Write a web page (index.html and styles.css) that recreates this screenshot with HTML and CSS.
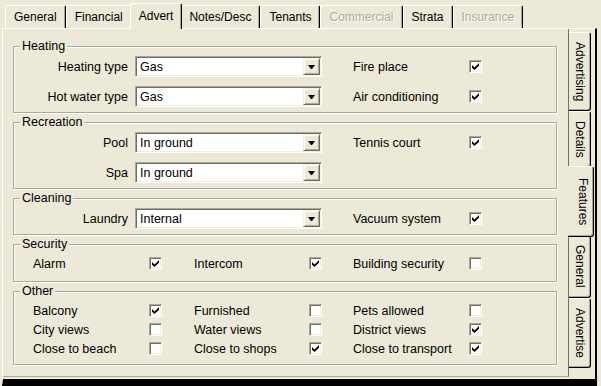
FILE: index.html
```html
<!DOCTYPE html>
<html lang="en">
<head>
    <meta charset="UTF-8">
    <title>Property - Advert</title>
    <link rel="stylesheet" href="styles.css">
</head>
<body>
    <div class="window">
        <div class="top-tabs">
            <span class="tab">General</span>
            <span class="tab">Financial</span>
            <span class="tab active">Advert</span>
            <span class="tab">Notes/Desc</span>
            <span class="tab">Tenants</span>
            <span class="tab disabled">Commercial</span>
            <span class="tab">Strata</span>
            <span class="tab disabled">Insurance</span>
        </div>

        <div class="frame">
            <div class="page">
                <fieldset class="group">
                    <legend>Heating</legend>
                    <div class="combo-rows">
                        <label class="field-label">Heating type</label>
                        <div class="combo"><span class="combo-value">Gas</span><span class="combo-btn"></span></div>
                        <span>Fire place</span>
                        <span class="check on"></span>

                        <label class="field-label">Hot water type</label>
                        <div class="combo"><span class="combo-value">Gas</span><span class="combo-btn"></span></div>
                        <span>Air conditioning</span>
                        <span class="check on"></span>
                    </div>
                </fieldset>

                <fieldset class="group">
                    <legend>Recreation</legend>
                    <div class="combo-rows">
                        <label class="field-label">Pool</label>
                        <div class="combo"><span class="combo-value">In ground</span><span class="combo-btn"></span></div>
                        <span>Tennis court</span>
                        <span class="check on"></span>

                        <label class="field-label">Spa</label>
                        <div class="combo"><span class="combo-value">In ground</span><span class="combo-btn"></span></div>
                    </div>
                </fieldset>

                <fieldset class="group">
                    <legend>Cleaning</legend>
                    <div class="combo-rows">
                        <label class="field-label">Laundry</label>
                        <div class="combo"><span class="combo-value">Internal</span><span class="combo-btn"></span></div>
                        <span>Vacuum system</span>
                        <span class="check on"></span>
                    </div>
                </fieldset>

                <fieldset class="group security">
                    <legend>Security</legend>
                    <div class="check-rows">
                        <span>Alarm</span><span class="check on"></span>
                        <span>Intercom</span><span class="check on"></span>
                        <span>Building security</span><span class="check"></span>
                    </div>
                </fieldset>

                <fieldset class="group other">
                    <legend>Other</legend>
                    <div class="check-rows">
                        <span>Balcony</span><span class="check on"></span>
                        <span>Furnished</span><span class="check"></span>
                        <span>Pets allowed</span><span class="check"></span>

                        <span>City views</span><span class="check"></span>
                        <span>Water views</span><span class="check"></span>
                        <span>District views</span><span class="check on"></span>

                        <span>Close to beach</span><span class="check"></span>
                        <span>Close to shops</span><span class="check on"></span>
                        <span>Close to transport</span><span class="check on"></span>
                    </div>
                </fieldset>
            </div>

            <div class="side-tabs">
                <span class="side-tab">Advertising</span>
                <span class="side-tab">Details</span>
                <span class="side-tab active">Features</span>
                <span class="side-tab">General</span>
                <span class="side-tab">Advertise</span>
            </div>
        </div>
    </div>
</body>
</html>
```

FILE: styles.css
```css
body {
    margin: 0;
    background-color: #ece9d8;
    font-family: "Liberation Sans", Arial, sans-serif;
    font-size: 12.5px;
    color: #000;
}
.window {
    width: 601px;
    height: 386px;
    overflow: hidden;
}

/* top tab strip */
.top-tabs {
    display: flex;
    align-items: flex-end;
    height: 28px;
    padding-left: 5px;
    font-size: 12px;
}
.tab {
    height: 23px;
    box-sizing: border-box;
    padding: 4px 8px 0;
    line-height: 14px;
    white-space: nowrap;
    background-color: #ece9d8;
    border: 1px solid #fff;
    border-bottom: none;
    border-right-color: #000;
    border-radius: 2px 2px 0 0;
    box-shadow: inset -1px 0 #aca899;
}
.tab.active {
    height: 26px;
    padding-top: 5px;
    margin: 0 -2px -1px;
    position: relative;
    z-index: 1;
}
.tab.disabled {
    color: #aca899;
    text-shadow: 1px 1px #fff;
}

/* frame holding the page and the side tabs */
.frame {
    display: flex;
    margin-left: 2px;
    width: 595px;
    box-sizing: border-box;
    border-top: 1px solid #fff;
    border-left: 1px solid #fff;
    border-right: 2px solid #000;
    border-bottom: 7px solid #000;
    padding-bottom: 2px;
}
.page {
    display: flex;
    flex-direction: column;
    gap: 2px;
    width: 566px;
    height: 348px;
    box-sizing: border-box;
    padding: 10px 11px 0 10px;
    border-right: 1px solid #716f64;
    border-bottom: 1px solid #aca899;
}

/* group boxes */
.group {
    margin: 0;
    padding: 0 0 5px;
    min-width: 0;
    border: 1px solid #aca899;
    box-shadow: inset 1px 1px #fff, 1px 1px #fff;
}
.group legend {
    margin-left: 6px;
    padding: 0 2px;
    line-height: 15px;
    background-color: #ece9d8;
}
.group.security {
    padding-bottom: 8px;
}
.group.other {
    padding-bottom: 6px;
}
.combo-rows {
    display: grid;
    grid-template-columns: 102px 218px 116px 13px;
    grid-auto-rows: 21px;
    row-gap: 9px;
    align-items: center;
    padding: 2px 0 0 19px;
}
.check-rows {
    display: grid;
    grid-template-columns: 116px 45px 115px 44px 116px 13px;
    grid-auto-rows: 19px;
    align-items: center;
    padding: 2px 0 0 19px;
}
.field-label {
    text-align: right;
    padding-right: 7px;
    white-space: nowrap;
}

/* combo box */
.combo {
    display: flex;
    align-items: center;
    width: 187px;
    height: 21px;
    box-sizing: border-box;
    padding: 1px;
    background-color: #fff;
    border: 1px solid;
    border-color: #aca899 #fff #fff #aca899;
    box-shadow: inset 1px 1px #716f64, inset -1px -1px #f1efe2;
}
.combo-value {
    flex: 1;
    padding-left: 3px;
}
.combo-btn {
    display: flex;
    align-items: center;
    justify-content: center;
    width: 17px;
    height: 17px;
    box-sizing: border-box;
    background-color: #ece9d8;
    border: 1px solid;
    border-color: #f1efe2 #716f64 #716f64 #f1efe2;
    box-shadow: inset 1px 1px #fff, inset -1px -1px #aca899;
}
.combo-btn::after {
    content: "";
    width: 1px;
    height: 0;
    border-style: solid;
    border-width: 4px 3px 0;
    border-color: #000 transparent transparent;
}

/* check boxes */
.check {
    display: flex;
    align-items: center;
    justify-content: center;
    width: 13px;
    height: 13px;
    box-sizing: border-box;
    background-color: #fff;
    border: 1px solid;
    border-color: #aca899 #fff #fff #aca899;
    box-shadow: inset 1px 1px #716f64, inset -1px -1px #f1efe2;
}
.check.on::after {
    content: "";
    width: 7px;
    height: 7px;
    background-color: #000;
    clip-path: polygon(0 28%, 36% 64%, 100% 0, 100% 40%, 36% 100%, 0 69%);
}

/* vertical tabs on the right */
.side-tabs {
    display: flex;
    flex-direction: column;
    width: 26px;
    padding-top: 3px;
    font-size: 12px;
}
.side-tab {
    writing-mode: vertical-rl;
    width: 22px;
    box-sizing: border-box;
    padding: 9px 0;
    line-height: 20px;
    text-align: center;
    white-space: nowrap;
    background-color: #ece9d8;
    border-top: 1px solid #fff;
    border-right: 1px solid #000;
    border-bottom: 1px solid #000;
    border-radius: 0 3px 3px 0;
    box-shadow: inset -1px -1px #aca899;
}
.side-tab.active {
    width: 26px;
    padding: 11px 0;
    margin: -2px 0 -2px -1px;
    position: relative;
    z-index: 1;
}
```
